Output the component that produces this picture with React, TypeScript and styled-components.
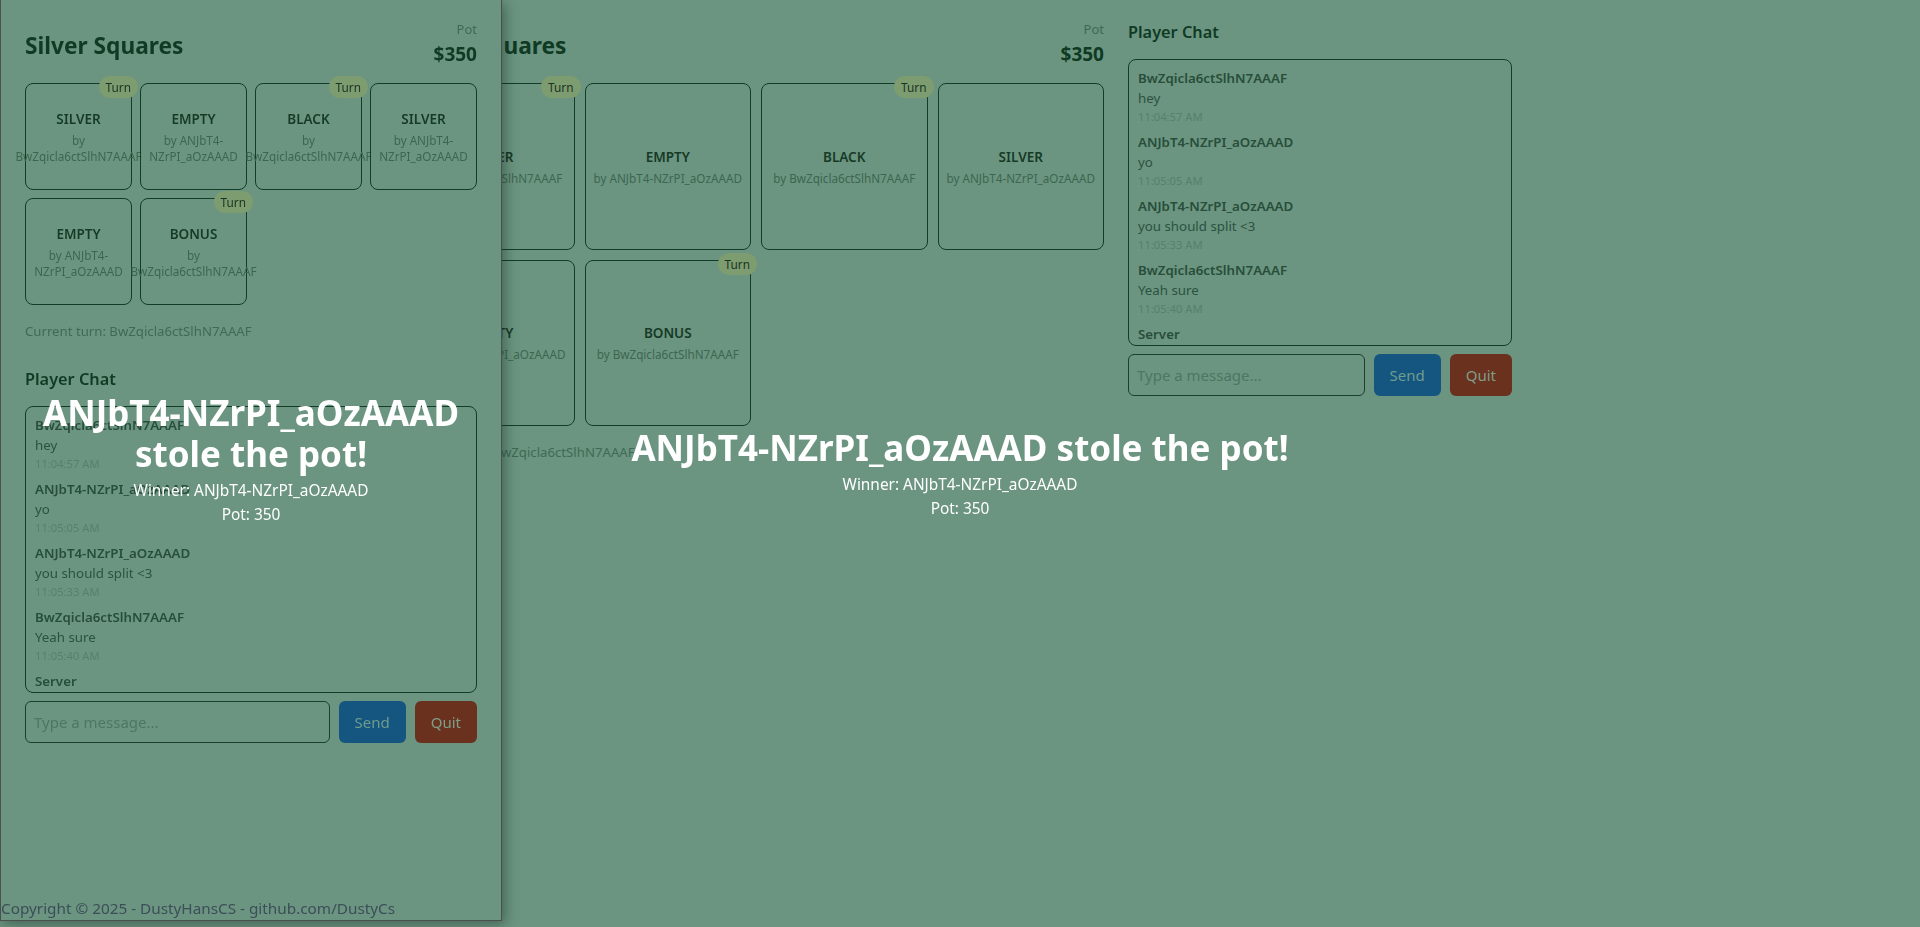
import React from 'react';
import styled, { createGlobalStyle } from 'styled-components';

const GlobalStyle = createGlobalStyle`
  html, body {
    margin: 0;
    padding: 0;
    height: 100%;
  }
  body {
    background: #6b9580;
    font-family: "Segoe UI", "Noto Sans", sans-serif;
    overflow: hidden;
  }
`;

type Square = { kind: string; by: string; turn?: boolean };
type Message = { name: string; text: string; time: string };

const squares: Square[] = [
  { kind: 'SILVER', by: 'BwZqicla6ctSlhN7AAAF', turn: true },
  { kind: 'EMPTY', by: 'ANJbT4-NZrPI_aOzAAAD' },
  { kind: 'BLACK', by: 'BwZqicla6ctSlhN7AAAF', turn: true },
  { kind: 'SILVER', by: 'ANJbT4-NZrPI_aOzAAAD' },
  { kind: 'EMPTY', by: 'ANJbT4-NZrPI_aOzAAAD' },
  { kind: 'BONUS', by: 'BwZqicla6ctSlhN7AAAF', turn: true },
];

const messages: Message[] = [
  { name: 'BwZqicla6ctSlhN7AAAF', text: 'hey', time: '11:04:57 AM' },
  { name: 'ANJbT4-NZrPI_aOzAAAD', text: 'yo', time: '11:05:05 AM' },
  { name: 'ANJbT4-NZrPI_aOzAAAD', text: 'you should split <3', time: '11:05:33 AM' },
  { name: 'BwZqicla6ctSlhN7AAAF', text: 'Yeah sure', time: '11:05:40 AM' },
  { name: 'Server', text: 'ANJbT4-NZrPI_aOzAAAD stole the pot!', time: '11:05:52 AM' },
];

const Page = styled.div`
  max-width: 1104px;
  margin: 0 auto;
  padding-top: 20px;
  display: grid;
  grid-template-columns: minmax(0, 1fr) 384px;
  gap: 24px;
  align-items: start;
`;

const Drawer = styled.aside`
  position: fixed;
  left: 0;
  top: 0;
  width: 500px;
  height: 920px;
  background: #6b9580;
  border: 1px solid #4b504d;
  border-top: none;
  box-shadow: 3px 3px 12px rgba(20, 40, 30, 0.45);
  z-index: 20;
  display: flex;
  flex-direction: column;
  overflow: hidden;
`;

const DrawerBody = styled.div`
  flex: 1;
  padding: 20px 24px 0;
`;

const Footer = styled.footer`
  font-size: 15.3px;
  line-height: 20px;
  color: #3c4e58;
  padding: 0 0 2px 0;
`;

const Header = styled.div`
  display: flex;
  justify-content: space-between;
  align-items: center;
  margin-bottom: 13px;
`;

const Title = styled.h1`
  margin: 0;
  font-size: 22.7px;
  font-weight: 700;
  color: #0f3a24;
`;

const PotBlock = styled.div`
  text-align: right;
`;

const PotLabel = styled.div`
  font-size: 13px;
  line-height: 18px;
  color: #3f6a55;
`;

const PotValue = styled.div`
  font-size: 19px;
  line-height: 32px;
  font-weight: 700;
  color: #0f3a24;
`;

const Grid = styled.div<{ $gap: number }>`
  display: grid;
  grid-template-columns: repeat(4, minmax(0, 1fr));
  gap: ${({ $gap }) => $gap}px;
`;

const Cell = styled.div`
  position: relative;
  aspect-ratio: 1;
  min-width: 0;
  border: 1px solid #123d27;
  border-radius: 8px;
  display: flex;
  flex-direction: column;
  align-items: center;
  justify-content: center;
`;

const CellKind = styled.div`
  font-size: 13.5px;
  line-height: 20px;
  font-weight: 600;
  color: #173a26;
  margin-bottom: 3px;
`;

const CellBy = styled.div`
  font-size: 11.7px;
  line-height: 16px;
  color: #3d6651;
  text-align: center;
`;

const TurnBadge = styled.span`
  position: absolute;
  top: -8px;
  right: -7px;
  height: 22px;
  padding: 0 7px;
  border-radius: 11px;
  background: #7d9d70;
  color: #1b3322;
  font-size: 11.8px;
  line-height: 22px;
`;

const CurrentTurn = styled.div`
  margin-top: 16px;
  font-size: 13.2px;
  line-height: 20px;
  color: #3f6a55;
`;

const ChatSection = styled.section<{ $stacked?: boolean }>`
  margin-top: ${({ $stacked }) => ($stacked ? '26px' : '0')};
`;

const ChatTitle = styled.h2`
  margin: 0 0 15px;
  font-size: 16.3px;
  line-height: 24px;
  font-weight: 600;
  color: #0f3a24;
`;

const ChatBox = styled.div`
  box-sizing: border-box;
  height: 287px;
  border: 1px solid #123d27;
  border-radius: 8px;
  padding: 8px 9px;
  overflow-y: scroll;

  &::-webkit-scrollbar {
    width: 12px;
  }
  &::-webkit-scrollbar-track {
    background: transparent;
  }
  &::-webkit-scrollbar-thumb {
    background: #4f7b64;
    border-radius: 6px;
    border: 3px solid transparent;
    background-clip: content-box;
  }
`;

const Msg = styled.div`
  margin-bottom: 6px;
`;

const MsgName = styled.div`
  font-size: 13.3px;
  line-height: 20px;
  font-weight: 600;
  color: #284d3a;
`;

const MsgText = styled.div`
  font-size: 13.3px;
  line-height: 20px;
  color: #2c5240;
`;

const MsgTime = styled.div`
  font-size: 11.2px;
  line-height: 18px;
  color: #56806b;
`;

const InputRow = styled.div`
  display: flex;
  gap: 9px;
  margin-top: 8px;
  height: 42px;
`;

const MessageInput = styled.input`
  flex: 1;
  min-width: 0;
  box-sizing: border-box;
  background: transparent;
  border: 1px solid #1c3f2c;
  border-radius: 6px;
  padding: 0 8px;
  font-family: inherit;
  font-size: 15px;
  color: #1c3f2c;
  outline: none;

  &::placeholder {
    color: #4d7663;
  }
`;

const ActionButton = styled.button<{ $tone: 'send' | 'quit' }>`
  border: none;
  border-radius: 6px;
  padding: 0 16px;
  font-family: inherit;
  font-size: 15px;
  background: ${({ $tone }) => ($tone === 'send' ? '#14567f' : '#6a311f')};
  color: ${({ $tone }) => ($tone === 'send' ? '#6f9c8f' : '#7f9e88')};
  cursor: pointer;
`;

const Overlay = styled.div<{ $fixed?: boolean; $shift: number }>`
  position: ${({ $fixed }) => ($fixed ? 'fixed' : 'absolute')};
  inset: 0;
  z-index: 10;
  display: flex;
  flex-direction: column;
  align-items: center;
  justify-content: center;
  padding-top: ${({ $shift }) => Math.max($shift, 0)}px;
  padding-bottom: ${({ $shift }) => Math.max(-$shift, 0)}px;
  text-align: center;
  color: #ffffff;
  pointer-events: none;
`;

const OverlayTitle = styled.div`
  font-size: 35px;
  line-height: 41px;
  font-weight: 700;
  margin-bottom: 6px;
`;

const OverlayLine = styled.div`
  font-size: 15.4px;
  line-height: 21px;
  & + & {
    margin-top: 3px;
  }
`;

const Board: React.FC<{ compact?: boolean }> = ({ compact }) => (
  <div>
    <Header>
      <Title>Silver Squares</Title>
      <PotBlock>
        <PotLabel>Pot</PotLabel>
        <PotValue>$350</PotValue>
      </PotBlock>
    </Header>
    <Grid $gap={compact ? 8 : 10}>
      {squares.map((sq, i) => (
        <Cell key={i}>
          {sq.turn && <TurnBadge>Turn</TurnBadge>}
          <CellKind>{sq.kind}</CellKind>
          <CellBy>by {sq.by}</CellBy>
        </Cell>
      ))}
    </Grid>
    <CurrentTurn>Current turn: BwZqicla6ctSlhN7AAAF</CurrentTurn>
  </div>
);

const Chat: React.FC<{ stacked?: boolean }> = ({ stacked }) => (
  <ChatSection $stacked={stacked}>
    <ChatTitle>Player Chat</ChatTitle>
    <ChatBox>
      {messages.map((m, i) => (
        <Msg key={i}>
          <MsgName>{m.name}</MsgName>
          <MsgText>{m.text}</MsgText>
          <MsgTime>{m.time}</MsgTime>
        </Msg>
      ))}
    </ChatBox>
    <InputRow>
      <MessageInput placeholder="Type a message..." />
      <ActionButton $tone="send">Send</ActionButton>
      <ActionButton $tone="quit">Quit</ActionButton>
    </InputRow>
  </ChatSection>
);

const Result: React.FC<{ fixed?: boolean; shift: number }> = ({ fixed, shift }) => (
  <Overlay $fixed={fixed} $shift={shift}>
    <OverlayTitle>ANJbT4-NZrPI_aOzAAAD stole the pot!</OverlayTitle>
    <OverlayLine>Winner: ANJbT4-NZrPI_aOzAAAD</OverlayLine>
    <OverlayLine>Pot: 350</OverlayLine>
  </Overlay>
);

export default function App() {
  return (
    <>
      <GlobalStyle />
      <Page>
        <Board />
        <Chat />
      </Page>
      <Result fixed shift={18} />
      <Drawer>
        <DrawerBody>
          <Board compact />
          <Chat stacked />
        </DrawerBody>
        <Footer>Copyright © 2025 - DustyHansCS - github.com/DustyCs</Footer>
        <Result shift={-4} />
      </Drawer>
    </>
  );
}
